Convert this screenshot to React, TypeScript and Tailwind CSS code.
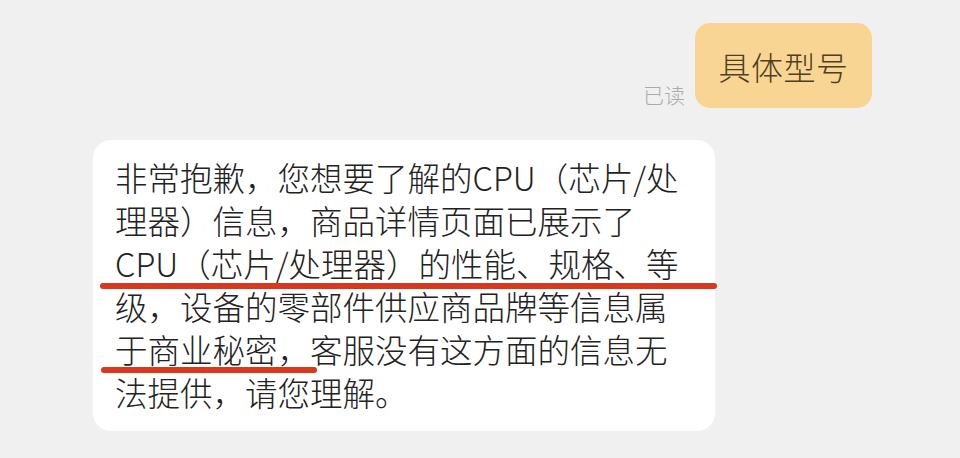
import React from "react";

const LINES = [
  "非常抱歉，您想要了解的CPU（芯片/处",
  "理器）信息，商品详情页面已展示了",
  "CPU（芯片/处理器）的性能、规格、等",
  "级，设备的零部件供应商品牌等信息属",
  "于商业秘密，客服没有这方面的信息无",
  "法提供，请您理解。",
];

export default function App() {
  return (
    <div
      className="w-[960px] h-[458px] overflow-hidden bg-[#f0f0f0]"
      style={{ fontFamily: '"Noto Sans CJK SC", "Noto Sans", sans-serif' }}
    >
      {/* Sent message */}
      <div className="flex justify-end items-end pt-[23px] pr-[88px] gap-[10px]">
        <span className="text-[21px] leading-none font-light text-[#ababab] mb-[3px]">已读</span>
        <div className="h-[85px] w-[177px] rounded-[15px] bg-[#f9d594] flex items-center justify-center">
          <span className="text-[32px] leading-none font-light text-[#4f3e1f] tracking-[0.5px]">具体型号</span>
        </div>
      </div>

      {/* Reply */}
      <div className="mt-[32px] ml-[93px]">
        <div className="relative w-[622px] rounded-[18px] bg-white pl-[22px] pt-[15px] pb-[18px]">
          {LINES.map((line, i) => (
            <div key={i} className="text-[32.5px] leading-[43px] font-light text-[#222] whitespace-nowrap">
              {line}
            </div>
          ))}

          {/* Hand-drawn underlines */}
          <div className="absolute left-[7px] top-[143px] w-[617px] h-[6px] rounded-full bg-[#d8391d]" />
          <div className="absolute left-[8px] top-[227px] w-[216px] h-[6px] rounded-full bg-[#d8391d]" />
        </div>
      </div>
    </div>
  );
}
